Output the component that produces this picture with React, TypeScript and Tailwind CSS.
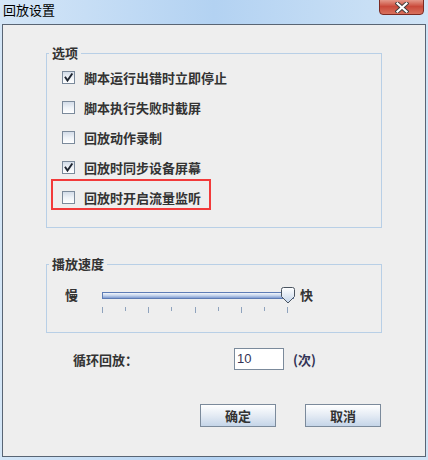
import React from "react";

const cjk = { fontFamily: '"Noto Sans CJK SC", "Noto Sans", sans-serif' };

function Check({ checked }: { checked?: boolean }) {
  return (
    <div className="w-[13px] h-[13px] shrink-0 border border-[#7b8a9b] bg-gradient-to-b from-[#d3dce8] via-[#eef2f7] to-white flex items-center justify-center">
      {checked && (
        <svg width="11" height="11" viewBox="0 0 11 11">
          <path d="M2.5 5.5 L4.5 8.5 L8.8 2.2" fill="none" stroke="#1e2530" strokeWidth="1.9" strokeLinecap="square" />
        </svg>
      )}
    </div>
  );
}

function Row({ label, checked, children }: { label: string; checked?: boolean; children?: React.ReactNode }) {
  return (
    <div className="relative h-[30px] pl-[15px] flex items-center gap-[9px]">
      <Check checked={checked} />
      <span className="text-[13px] font-bold text-[#333333] leading-none" style={cjk}>{label}</span>
      {children}
    </div>
  );
}

function GroupTitle({ text }: { text: string }) {
  return (
    <div className="absolute left-[2px] top-[-9px] px-[3px] bg-[#eeeeee] text-[13px] font-bold text-[#333333] leading-[16px]" style={cjk}>
      {text}
    </div>
  );
}

const ticks = [true, false, true, false, true, false, true, false, true];

export default function App() {
  return (
    <div className="w-[428px] h-[460px] flex flex-col bg-gradient-to-r from-[#d4e6f7] via-[#b3d2f2] to-[#d0e4f6] overflow-hidden">
      <div className="h-[24px] flex justify-between items-start shrink-0">
        <div className="pl-[3px] pt-[3px] text-[13px] text-black leading-[14px]" style={cjk}>回放设置</div>
        <div className="mr-[4px] mt-[-2px] w-[45px] h-[17px] rounded-b-[4px] border border-[#7b2a22] bg-gradient-to-b from-[#e7a396] via-[#c9493a] to-[#d8705c] flex items-center justify-center pt-[2px]">
          <svg width="14" height="11" viewBox="0 0 14 11">
            <path d="M2.5 1.5 L11.5 9.5 M11.5 1.5 L2.5 9.5" stroke="#3c3c3c" strokeWidth="4" strokeLinecap="square" />
            <path d="M2.5 1.5 L11.5 9.5 M11.5 1.5 L2.5 9.5" stroke="#ffffff" strokeWidth="2.2" strokeLinecap="square" />
          </svg>
        </div>
      </div>
      <div className="ml-[2px] w-[424px] h-[433px] shrink-0 border border-[#596574] bg-[#eeeeee] flex flex-col">
        {/* Options group */}
        <div className="relative mt-[28px] ml-[43px] w-[336px] h-[175px] border border-[#b8cfe6] pt-[8px]">
          <GroupTitle text="选项" />
          <Row label="脚本运行出错时立即停止" checked />
          <Row label="脚本执行失败时截屏" />
          <Row label="回放动作录制" />
          <Row label="回放时同步设备屏幕" checked />
          <div className="relative">
            <Row label="回放时开启流量监听" />
            <div className="absolute left-[4px] top-[-3px] w-[160px] h-[31px] border-2 border-[#f23a3a]" />
          </div>
        </div>

        {/* Speed group */}
        <div className="relative mt-[36px] ml-[43px] w-[336px] h-[69px] border border-[#b8cfe6]">
          <GroupTitle text="播放速度" />
          <div className="flex items-start pl-[18px] pt-[22px]">
            <span className="text-[13px] font-bold text-[#333333] leading-[16px] w-[37px]" style={cjk}>慢</span>
            <div className="w-[194px] flex flex-col pt-[5px]">
              <div className="relative h-[7px] w-[192px]">
                <div className="h-[7px] w-[192px] border border-[#5d7cb5] bg-gradient-to-b from-[#f3f6fb] via-[#c3d3ec] to-[#7f9bd0]" />
                <svg className="absolute left-[178px] top-[-5px]" width="16" height="17" viewBox="0 0 16 17">
                  <defs>
                    <linearGradient id="tg" x1="0" y1="0" x2="0" y2="1">
                      <stop offset="0" stopColor="#ffffff" />
                      <stop offset="1" stopColor="#c3d4ea" />
                    </linearGradient>
                  </defs>
                  <path d="M1.5 2.5 Q1.5 0.5 3.5 0.5 L12.5 0.5 Q14.5 0.5 14.5 2.5 L14.5 9.5 L8 16 L1.5 9.5 Z" fill="url(#tg)" stroke="#4a5460" strokeWidth="1" />
                </svg>
              </div>
              <div className="mt-[8px] w-[186px] flex justify-between items-start">
                {ticks.map((major, i) => (
                  <div key={i} className={major ? "w-px h-[6px] bg-[#8fa3bd]" : "w-px h-[4px] bg-[#8fa3bd]"} />
                ))}
              </div>
            </div>
            <span className="ml-[4px] text-[13px] font-bold text-[#333333] leading-[16px]" style={cjk}>快</span>
          </div>
        </div>

        {/* Loop */}
        <div className="mt-[15px] ml-[70px] h-[22px] flex items-center">
          <span className="w-[161px] text-[13px] font-bold text-[#333333] leading-none" style={cjk}>循环回放：</span>
          <div className="w-[50px] h-[22px] border border-[#7b8a9b] bg-white flex items-center pl-[2px] text-[13px] text-[#333355]" style={{ fontFamily: '"Liberation Sans", Arial, sans-serif' }}>10</div>
          <span className="ml-[9px] text-[13px] text-[#333355] font-bold leading-none" style={cjk}>(次)</span>
        </div>

        {/* Buttons */}
        <div className="mt-[34px] ml-[197px] flex gap-[29px]">
          <button className="w-[76px] h-[23px] border border-[#7b8a9b] bg-gradient-to-b from-white via-[#e4ebf4] to-[#c5d5e8] text-[13px] font-bold text-[#333333] leading-none" style={cjk}>确定</button>
          <button className="w-[76px] h-[23px] border border-[#7b8a9b] bg-gradient-to-b from-white via-[#e4ebf4] to-[#c5d5e8] text-[13px] font-bold text-[#333333] leading-none" style={cjk}>取消</button>
        </div>
      </div>
    </div>
  );
}
